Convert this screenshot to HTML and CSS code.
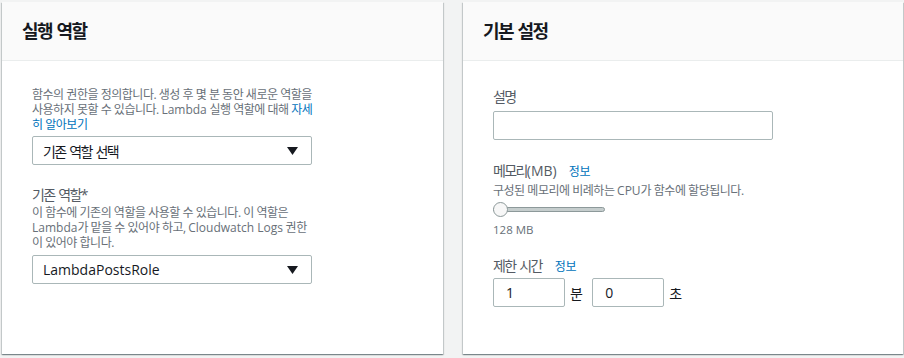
FILE: index.html
```html
<!DOCTYPE html>
<html lang="ko">
<head>
<meta charset="utf-8">
<title>Lambda 설정</title>
<link rel="stylesheet" href="styles.css">
</head>
<body>
<main class="grid">
  <section class="card">
    <header class="card-head"><h2>실행 역할</h2></header>
    <div class="card-body">
      <p class="desc">함수의 권한을 정의합니다. 생성 후 몇 분 동안 새로운 역할을<br>사용하지 못할 수 있습니다. <span class="en">Lambda</span> 실행 역할에 대해 <a class="link" href="#">자세<br>히 알아보기</a></p>
      <div class="select first-select">
        <span class="select-text">기존 역할 선택</span>
        <svg class="caret" width="11" height="8" viewBox="0 0 11 8"><polygon points="0,0 11,0 5.5,8" fill="#16191f"/></svg>
      </div>
      <div class="label role-label">기존 역할*</div>
      <p class="desc">이 함수에 기존의 역할을 사용할 수 있습니다. 이 역할은<br><span class="en">Lambda</span>가 맡을 수 있어야 하고, <span class="en">Cloudwatch Logs</span> 권한<br>이 있어야 합니다.</p>
      <div class="select second-select">
        <span class="select-text en">LambdaPostsRole</span>
        <svg class="caret" width="11" height="8" viewBox="0 0 11 8"><polygon points="0,0 11,0 5.5,8" fill="#16191f"/></svg>
      </div>
    </div>
  </section>
  <section class="card">
    <header class="card-head"><h2>기본 설정</h2></header>
    <div class="card-body right-body">
      <div class="label">설명</div>
      <div class="input wide-input"></div>
      <div class="label mem-label"><span>메모리<span class="en">(MB)</span></span><a class="info" href="#">정보</a></div>
      <p class="desc">구성된 메모리에 비례하는 <span class="en">CPU</span>가 함수에 할당됩니다.</p>
      <div class="slider">
        <div class="track"></div>
        <div class="thumb"></div>
      </div>
      <div class="mem-value en">128 MB</div>
      <div class="label time-label"><span>제한 시간</span><a class="info" href="#">정보</a></div>
      <div class="time-row">
        <div class="input small-input en">1</div>
        <span class="unit">분</span>
        <div class="input small-input en">0</div>
        <span class="unit">초</span>
      </div>
    </div>
  </section>
</main>
</body>
</html>
```
FILE: styles.css
```css
* { box-sizing: border-box; }
html, body { margin: 0; }
body {
  background: #f2f3f3;
  font-family: "Open Sans", "Noto Sans CJK KR", sans-serif;
  color: #16191f;
  padding: 2px;
  letter-spacing: -0.1em;
  word-spacing: 0.1em;
}
.en { letter-spacing: normal; word-spacing: normal; }
.grid {
  display: grid;
  grid-template-columns: 441px 440px;
  column-gap: 20px;
}
.card {
  background: #fff;
  height: 352px;
  box-shadow: 0 1px 1px 0 rgba(0,28,36,.3), 1px 1px 1px 0 rgba(0,28,36,.15), -1px 1px 1px 0 rgba(0,28,36,.15);
}
.card-head {
  height: 59px;
  background: #fafafa;
  border-bottom: 1px solid #eaeded;
  padding: 0 20px;
  display: flex;
  align-items: center;
}
.card-head h2 {
  margin: 0;
  font-size: 18px;
  font-weight: 700;
  color: #16191f;
  line-height: 22px;
}
.card-body {
  padding: 26px 30px 0;
  display: flex;
  flex-direction: column;
  align-items: flex-start;
}
.desc {
  margin: 0;
  font-size: 12px;
  line-height: 15px;
  color: #687078;
  white-space: nowrap;
  letter-spacing: -0.04em;
  word-spacing: 0;
}
.link, .info { color: #0073bb; text-decoration: none; }
.select {
  width: 280px;
  height: 29px;
  border: 1px solid #aab7b8;
  border-radius: 2px;
  display: flex;
  align-items: center;
  justify-content: space-between;
  padding: 0 13px 0 10px;
  font-size: 14px;
  color: #16191f;
}
.first-select { margin-top: 4px; }
.second-select { margin-top: 5px; }
.label {
  font-size: 14px;
  line-height: 20px;
  color: #545b64;
}
.role-label { margin-top: 20px; }
.input {
  border: 1px solid #aab7b8;
  border-radius: 2px;
  height: 29px;
  background: #fff;
}
.wide-input { width: 280px; margin-top: 4px; }
.mem-label { margin-top: 21px; display: flex; align-items: baseline; gap: 12px; }
.mem-label + .desc { margin-top: 1px; }
.info { font-size: 12px; letter-spacing: -0.03em; }
.slider {
  position: relative;
  width: 112px;
  height: 15px;
  margin-top: 4px;
  display: flex;
  align-items: center;
}
.track {
  width: 112px;
  height: 5px;
  border-radius: 3px;
  background: #c5cdcd;
  border: 1px solid #8d999a;
}
.thumb {
  position: absolute;
  left: 0;
  top: 0;
  width: 15px;
  height: 15px;
  border-radius: 50%;
  background: #f7f7f7;
  border: 1px solid #8d999a;
}
.mem-value {
  margin-top: 5px;
  font-size: 11.5px;
  line-height: 15px;
  color: #687078;
}
.time-label { margin-top: 19px; display: flex; align-items: baseline; gap: 13px; }
.time-row {
  margin-top: 1px;
  display: flex;
  align-items: center;
}
.small-input {
  width: 72px;
  padding-left: 12px;
  display: flex;
  align-items: center;
  font-size: 14px;
  color: #16191f;
}
.unit {
  font-size: 14px;
  color: #16191f;
  margin: 0 11px 0 5px;
}
```
